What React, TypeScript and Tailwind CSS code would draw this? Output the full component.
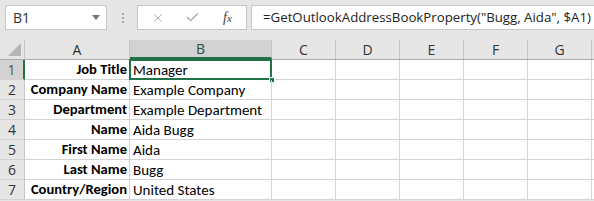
import { X, Check } from 'lucide-react'

const cols = [
  { id: 'A', w: 'w-[105px]' },
  { id: 'B', w: 'w-[142px]' },
  { id: 'C', w: 'w-[64px]' },
  { id: 'D', w: 'w-[64px]' },
  { id: 'E', w: 'w-[64px]' },
  { id: 'F', w: 'w-[64px]' },
  { id: 'G', w: 'w-[64px]' },
]

const rows: [string, string][] = [
  ['Job Title', 'Manager'],
  ['Company Name', 'Example Company'],
  ['Department', 'Example Department'],
  ['Name', 'Aida Bugg'],
  ['First Name', 'Aida'],
  ['Last Name', 'Bugg'],
  ['Country/Region', 'United States'],
]

const cellFont = "font-['Carlito','Liberation_Sans',sans-serif] text-black"

export default function App() {
  return (
    <div className="w-[594px] h-[201px] overflow-hidden bg-[#e6e6e6] font-['Open_Sans',sans-serif] select-none">
      {/* Formula bar */}
      <div className="flex items-center h-[40px] pt-[5px] pb-[10px] pl-[5px]">
        <div className="relative flex items-center w-[102px] h-[25px] bg-white border border-[#c6c6c6] pl-[7px] text-[14px] text-[#333]">
          B1
          <span className="absolute right-[6px] top-[9px] w-0 h-0 border-l-[4px] border-r-[4px] border-t-[5px] border-l-transparent border-r-transparent border-t-[#777]" />
        </div>
        <div className="flex flex-col gap-[2px] ml-[15px] mr-[13px]">
          <span className="w-[2px] h-[2px] bg-[#a8a8a8]" />
          <span className="w-[2px] h-[2px] bg-[#a8a8a8]" />
          <span className="w-[2px] h-[2px] bg-[#a8a8a8]" />
        </div>
        <div className="flex items-center w-[110px] h-[25px] bg-white border border-[#c6c6c6]">
          <X className="w-[14px] h-[14px] text-[#a6a6a6] ml-[13px]" strokeWidth={1.5} />
          <Check className="w-[15px] h-[15px] text-[#a6a6a6] ml-[20px]" strokeWidth={2} />
          <span className="ml-[23px] font-['Liberation_Serif',serif] italic text-[14px] text-[#444]">
            f<span className="text-[11px]">x</span>
          </span>
        </div>
        <div className="flex items-center flex-1 h-[25px] ml-[4px] bg-white border border-[#c6c6c6] border-r-0 pl-[11px] text-[13.25px] text-[#222] whitespace-nowrap overflow-hidden">
          =GetOutlookAddressBookProperty("Bugg, Aida", $A1)
        </div>
      </div>

      {/* Column headers */}
      <div className="flex h-[20px] border-b border-[#ababab]">
        <div className="relative w-[25px] h-full border-r border-[#c6c6c6]">
          <span className="absolute right-[3px] bottom-[3px] w-0 h-0 border-l-[13px] border-l-transparent [border-bottom:13px_solid_#b5b5b5]" />
        </div>
        {cols.map((c) => (
          <div
            key={c.id}
            className={`${c.w} h-full flex items-center justify-center text-[14px] border-r border-[#c6c6c6] ${
              c.id === 'B'
                ? 'bg-[#d2d2d2] text-[#2d4f3c] border-b-2 border-b-[#217346]'
                : 'text-[#333]'
            }`}
          >
            {c.id}
          </div>
        ))}
        <div className="flex-1" />
      </div>

      {/* Grid rows */}
      <div className="bg-white">
        {rows.map(([label, value], i) => (
          <div key={i} className="flex h-[20px]">
            <div
              className={`w-[25px] h-full flex items-center justify-center text-[14px] border-b border-[#d4d4d4] ${
                i === 0
                  ? 'bg-[#d2d2d2] text-[#555] border-r-2 border-r-[#217346]'
                  : 'bg-[#e6e6e6] text-[#333] border-r border-r-[#c6c6c6]'
              }`}
            >
              {i + 1}
            </div>
            <div
              className={`w-[105px] h-full flex items-center justify-end pr-[2px] pt-[1px] font-bold text-[14.6px] border-r border-b border-[#d4d4d4] whitespace-nowrap ${cellFont}`}
            >
              {label}
            </div>
            <div
              className={`relative w-[142px] h-full flex items-center pl-[3px] pt-[1px] text-[15px] border-r border-b border-[#d4d4d4] whitespace-nowrap ${cellFont}`}
            >
              {value}
              {i === 0 && (
                <>
                  <span className="absolute -left-[1px] -top-[1px] w-[143px] h-[21px] border-2 border-[#217346]" />
                  <span className="absolute -right-[4px] -bottom-[4px] w-[6px] h-[6px] bg-[#217346] border border-white" />
                </>
              )}
            </div>
            {cols.slice(2).map((c) => (
              <div key={c.id} className={`${c.w} h-full border-r border-b border-[#d4d4d4]`} />
            ))}
            <div className="flex-1 h-full border-b border-[#d4d4d4]" />
          </div>
        ))}
      </div>
    </div>
  )
}
